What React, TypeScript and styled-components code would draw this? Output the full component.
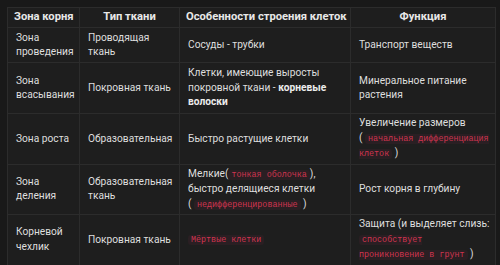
import styled, { createGlobalStyle } from "styled-components";

const GlobalStyle = createGlobalStyle`
  html, body {
    margin: 0;
    padding: 0;
    background: #191919;
  }
  body {
    font-family: Roboto, "Noto Sans", sans-serif;
  }
`;

const Page = styled.div`
  padding: 7px 5px 7px 7px;
  width: 500px;
  height: 265px;
  box-sizing: border-box;
`;

const Table = styled.table`
  width: 488px;
  table-layout: fixed;
  border-collapse: collapse;
  background: #1e1e1e;
  color: #dedede;
  font-size: 10.2px;
  line-height: 14.5px;
`;

const Th = styled.th`
  font-weight: 700;
  font-size: 11.2px;
  text-align: center;
  padding: 2px 6px;
  height: 15px;
  border: 1px solid #2c2c2c;
  color: #e8e8e8;
  white-space: nowrap;
`;

const Td = styled.td<{ $h: number }>`
  height: ${(p) => p.$h}px;
  padding: 2px 4px 2px 8px;
  border: 1px solid #2c2c2c;
  vertical-align: middle;
  box-sizing: border-box;
`;

const Code = styled.code`
  font-family: "Liberation Mono", "DejaVu Sans Mono", monospace;
  font-size: 8.4px;
  color: #d0344f;
  background: #2a1f23;
  border-radius: 3px;
  padding: 0 3px;
`;

const B = styled.b`
  font-weight: 700;
  color: #ececec;
`;

const rows = [
  { h: 35, cells: ["Зона проведения", "Проводящая ткань", "Сосуды - трубки", "Транспорт веществ"] },
  { h: 51, cells: ["Зона всасывания", "Покровная ткань", null, "Минеральное питание растения"] },
  { h: 50, cells: ["Зона роста", "Образовательная", "Быстро растущие клетки", null] },
  { h: 49, cells: ["Зона деления", "Образовательная ткань", null, "Рост корня в глубину"] },
  { h: 47, cells: ["Корневой чехлик", "Покровная ткань", null, null] },
];

const special: Record<string, JSX.Element> = {
  "1-2": (
    <>
      Клетки, имеющие выросты покровной ткани - <B>корневые волоски</B>
    </>
  ),
  "2-3": (
    <>
      Увеличение размеров (&nbsp;<Code>начальная дифференциация клеток</Code> )
    </>
  ),
  "3-2": (
    <>
      Мелкие(<Code>тонкая оболочка</Code>), быстро делящиеся клетки (&nbsp;<Code>недифференцированные</Code> )
    </>
  ),
  "4-2": <Code>Мёртвые клетки</Code>,
  "4-3": (
    <>
      Защита (и выделяет слизь: <Code>способствует проникновение в грунт</Code> )
    </>
  ),
};

export default function App() {
  return (
    <Page>
      <GlobalStyle />
      <Table>
        <colgroup>
          <col style={{ width: 72 }} />
          <col style={{ width: 100 }} />
          <col style={{ width: 171 }} />
          <col style={{ width: 145 }} />
        </colgroup>
        <thead>
          <tr>
            <Th>Зона корня</Th>
            <Th>Тип ткани</Th>
            <Th>Особенности строения клеток</Th>
            <Th>Функция</Th>
          </tr>
        </thead>
        <tbody>
          {rows.map((row, i) => (
            <tr key={i}>
              {row.cells.map((c, j) => (
                <Td key={j} $h={row.h}>
                  {c ?? special[`${i}-${j}`]}
                </Td>
              ))}
            </tr>
          ))}
        </tbody>
      </Table>
    </Page>
  );
}
